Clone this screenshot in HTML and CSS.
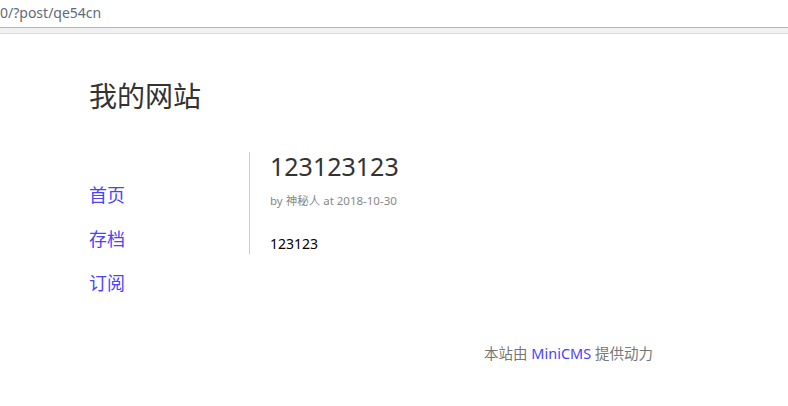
FILE: index.html
```html
<!DOCTYPE html>
<html lang="zh">
<head>
<meta charset="utf-8">
<title>我的网站</title>
<link rel="stylesheet" href="styles.css">
</head>
<body>
<div class="urlbar">0/?post/qe54cn</div>
<div class="strip"></div>
<div class="page">
  <h1 class="site-title">我的网站</h1>
  <div class="main">
    <nav class="nav">
      <a href="#">首页</a>
      <a href="#">存档</a>
      <a href="#">订阅</a>
    </nav>
    <article class="post">
      <h2 class="post-title">123123123</h2>
      <div class="meta">by 神秘人 at 2018-10-30</div>
      <div class="content">123123</div>
    </article>
  </div>
  <footer class="footer">本站由 <a href="#">MiniCMS</a> 提供动力</footer>
</div>
</body>
</html>
```

FILE: styles.css
```css
html, body {
  margin: 0;
  padding: 0;
  background: #fff;
  font-family: "Noto Sans", "Noto Sans CJK SC", sans-serif;
}
.urlbar {
  height: 27px;
  line-height: 26px;
  font-size: 14px;
  color: #5f6b78;
  border-bottom: 1px solid #b5b5b5;
  white-space: nowrap;
}
.strip {
  height: 5px;
  background: #f1f1f1;
  border-bottom: 1px solid #dcdcdc;
}
.page {
  padding-left: 89px;
  width: 564px;
}
.site-title {
  margin: 0;
  padding-top: 44px;
  font-size: 28px;
  font-weight: normal;
  color: #333;
  line-height: 36px;
}
.main {
  display: flex;
  margin-top: 38px;
}
.nav {
  width: 160px;
  display: flex;
  flex-direction: column;
  gap: 18px;
  padding-top: 30px;
}
.nav a {
  font-size: 18px;
  line-height: 26px;
  color: #4a42ff;
  text-decoration: none;
}
.post {
  border-left: 1px solid #ccc;
  padding-left: 20px;
  align-self: flex-start;
}
.post-title {
  margin: 0;
  font-size: 25px;
  font-weight: normal;
  color: #333;
  line-height: 28px;
}
.meta {
  margin-top: 13px;
  font-size: 11.5px;
  color: #888;
  line-height: 16px;
}
.content {
  margin-top: 25px;
  font-size: 14px;
  color: #000;
  line-height: 20px;
}
.footer {
  margin-top: 48px;
  text-align: right;
  font-size: 14.5px;
  line-height: 19px;
  color: #777;
}
.footer a {
  color: #4a42ff;
  text-decoration: none;
}
```
